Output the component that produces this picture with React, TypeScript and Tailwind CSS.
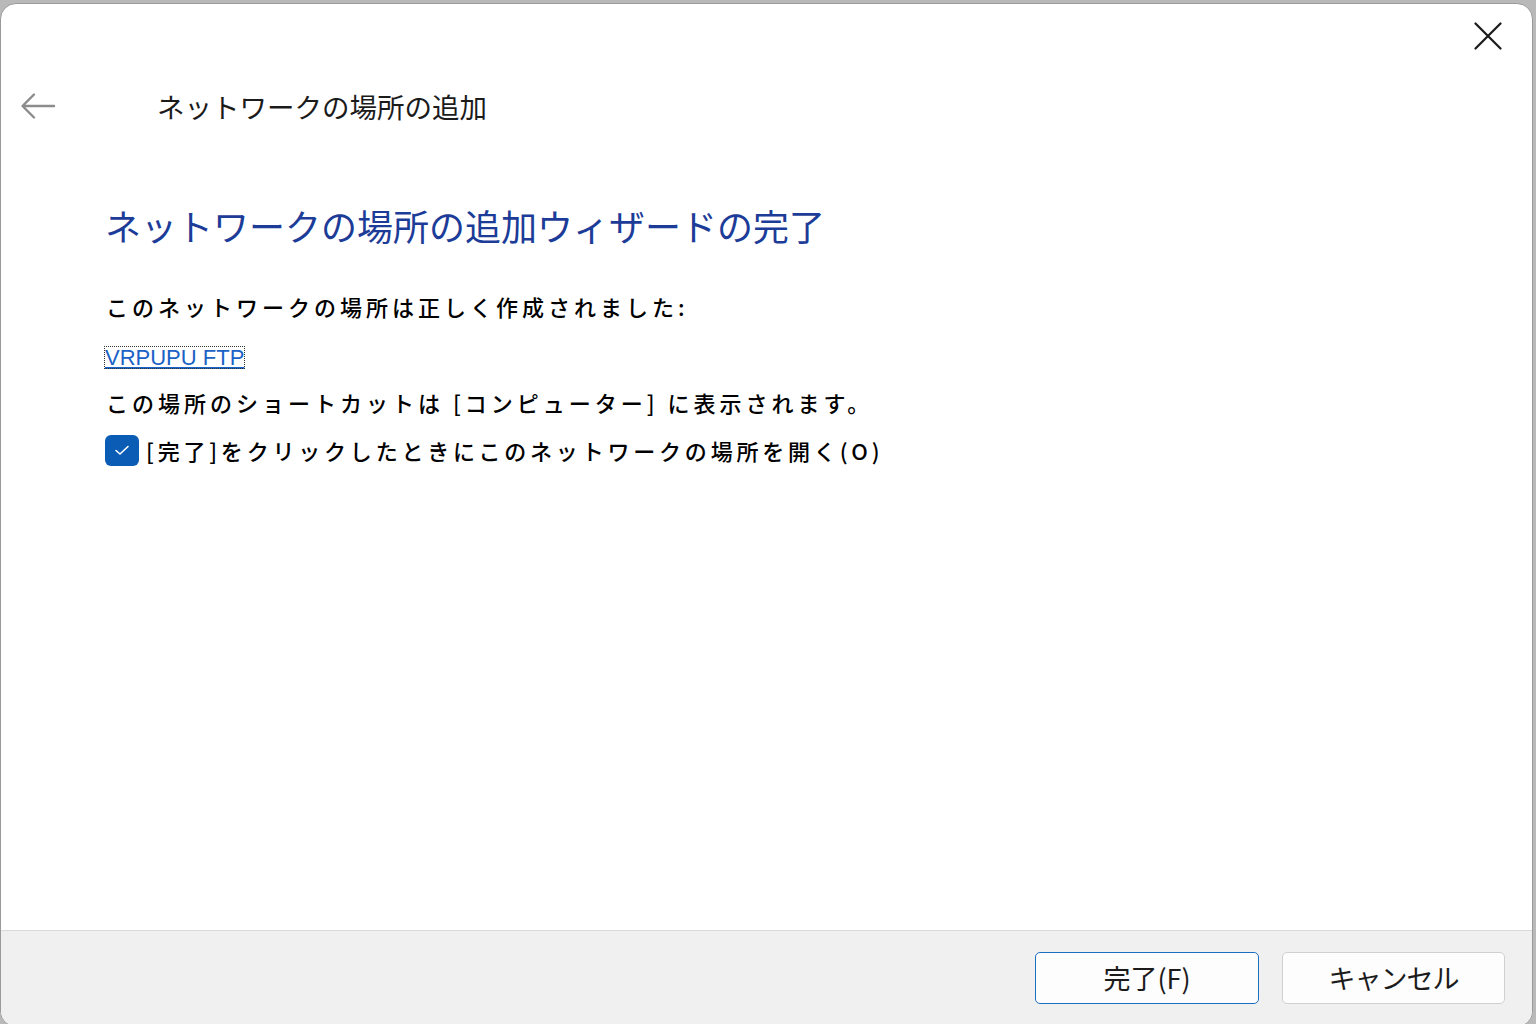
import React from "react";

const jp = { fontFamily: '"Noto Sans CJK JP", "Noto Sans", sans-serif' };

export default function App() {
  return (
    <div className="w-[1536px] h-[1024px] bg-[#b9b9b9] pt-[3px] overflow-hidden" style={jp}>
      <div className="w-[1533px] h-[1024px] bg-white rounded-[16px] border border-[#9a9a9a] flex flex-col overflow-hidden">
        {/* close row */}
        <div className="h-[63px] flex justify-end items-start pt-[18px] pr-[30px] shrink-0">
          <svg width="28" height="28" viewBox="0 0 28 28" className="text-[#1a1a1a]">
            <path d="M1.5 1.5 L26.5 26.5 M26.5 1.5 L1.5 26.5" stroke="currentColor" strokeWidth="2.2" fill="none" strokeLinecap="round" />
          </svg>
        </div>
        {/* header row */}
        <div className="h-[78px] flex items-center shrink-0">
          <div className="w-[156px] pl-[19px] flex items-center">
            <svg width="36" height="28" viewBox="0 0 36 28" className="text-[#8c8c8c]">
              <path d="M34 14 H3 M14 2.5 L2.5 14 L14 25.5" stroke="currentColor" strokeWidth="2.4" fill="none" strokeLinecap="round" strokeLinejoin="round" />
            </svg>
          </div>
          <div className="text-[27.5px] leading-[36px] text-[#1b1b1b]">ネットワークの場所の追加</div>
        </div>
        {/* content */}
        <div className="flex-1 pl-[104px] flex flex-col">
          <div className="mt-[56px] text-[36px] leading-[48px] text-[#1c3c98]">
            ネットワークの場所の追加ウィザードの完了
          </div>
          <div className="mt-[41px] flex flex-col gap-[16px] text-black text-[22px] font-medium tracking-[4px]">
            <div className="h-[32px] leading-[32px] pl-[1px]">このネットワークの場所は正しく作成されました:</div>
            <div className="h-[32px] flex items-center pt-[6px]">
              <span
                className="text-[22px] leading-[21px] font-normal tracking-normal text-[#1a62c6] underline outline outline-1 outline-dotted outline-[#333]"
                style={{ fontFamily: '"Liberation Sans", Arial, sans-serif' }}
              >
                VRPUPU FTP
              </span>
            </div>
            <div className="h-[32px] leading-[32px] pl-[1px]">この場所のショートカットは [コンピューター] に表示されます。</div>
            <div className="h-[32px] flex items-center">
              <div className="w-[34px] h-[31px] rounded-[6px] bg-[#0b5cb4] flex items-center justify-center mr-[7px]">
                <svg width="18" height="14" viewBox="0 0 18 14">
                  <path d="M3 7.5 L7 11 L15 3.5" stroke="white" strokeWidth="1.6" fill="none" strokeLinecap="round" strokeLinejoin="round" />
                </svg>
              </div>
              <span className="leading-[32px] tracking-[3.8px]">[完了]をクリックしたときにこのネットワークの場所を開く(O)</span>
            </div>
          </div>
        </div>
        {/* footer */}
        <div className="h-[96px] shrink-0 bg-[#f0f0f0] border-t border-[#dadada] flex justify-end items-start pt-[21px] pr-[27px] gap-[23px]">
          <button className="w-[224px] h-[52px] rounded-[5px] bg-[#fdfdfd] border-[1.5px] border-[#1a6fc4] text-[27px] text-[#1b1b1b] flex items-center justify-center">
            完了(F)
          </button>
          <button className="w-[223px] h-[52px] rounded-[5px] bg-[#fdfdfd] border border-[#d0d0d0] text-[27px] text-[#1b1b1b] tracking-[-1px] flex items-center justify-center">
            キャンセル
          </button>
        </div>
      </div>
    </div>
  );
}
